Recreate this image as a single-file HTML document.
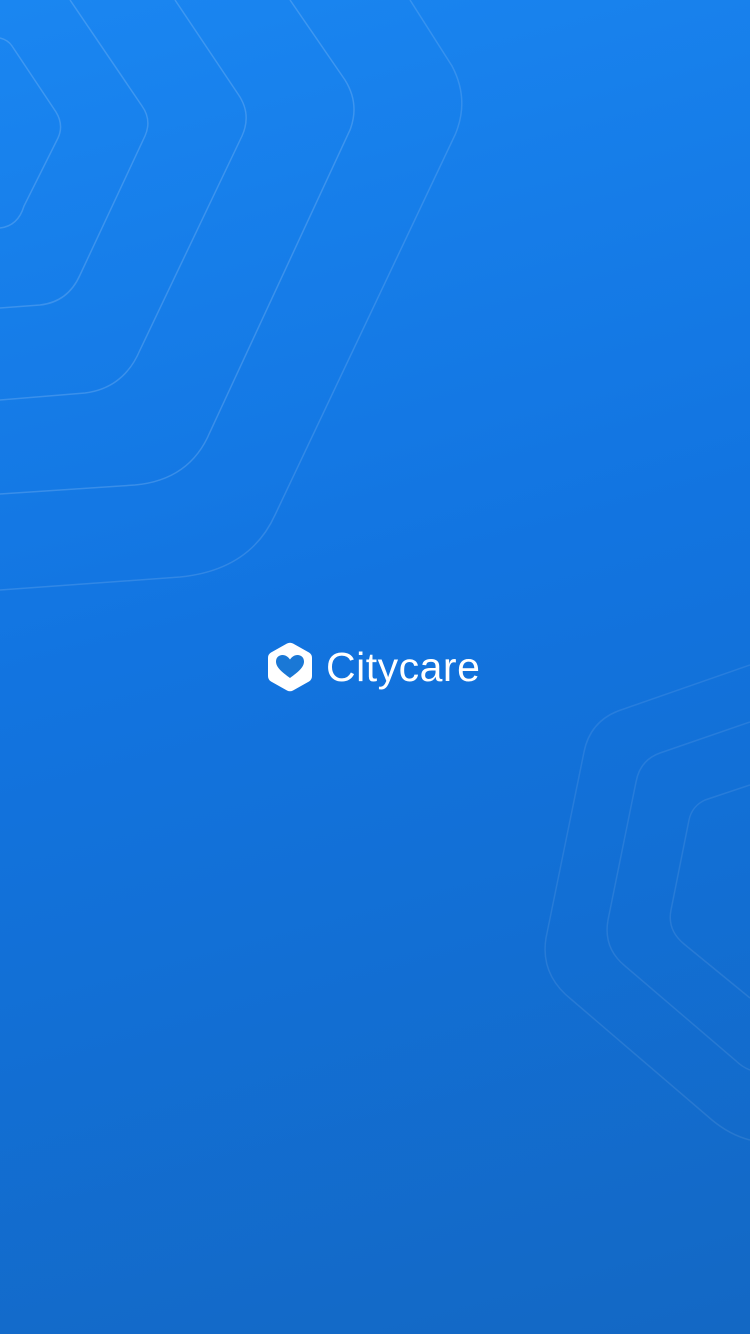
<!DOCTYPE html>
<html><head><meta charset="utf-8"><style>
html,body{margin:0;padding:0}
body{width:750px;height:1334px;overflow:hidden;position:relative;background:linear-gradient(165deg,#1a86f1 0%,#1274e0 45%,#1368c4 100%);font-family:"Liberation Sans",sans-serif}
svg{position:absolute}
.t{position:absolute;left:326px;top:644px;color:#fff;font-size:41px;letter-spacing:0.5px;font-family:"Liberation Sans",sans-serif;line-height:46px}
</style></head><body>
<svg width="750" height="1334" fill="none" stroke-width="1.5" style="left:0;top:0">
<g stroke="rgba(255,255,255,0.16)">
<path d="M0 38 Q8 40 12 46 L56 112 Q64 125 58 138 L24 206 Q18 226 0 228"/>
<path d="M70 0 L142 106 Q152 120 145 136 L80 275 Q68 302 40 305 L0 308"/>
<path d="M175 0 L238 94 Q252 114 242 136 L140 350 Q124 388 85 393 L0 400"/>
<path d="M290 0 L345 80 Q360 104 350 130 L210 432 Q190 480 135 485 L0 494"/>
<path d="M410 0 L452 66 Q470 100 455 135 L275 515 Q250 570 180 577 L0 590" stroke="rgba(255,255,255,0.13)"/>
</g>
<g stroke="rgba(255,255,255,0.09)">
<path d="M750 665 L618 711 Q590 722 584 752 L546 938 Q540 975 572 1000 L712 1120 Q730 1135 750 1140"/>
<path d="M750 722 L660 753 Q640 760 636 782 L608 920 Q603 948 625 966 L735 1060 Q742 1067 750 1070"/>
<path d="M750 785 L705 800 Q692 806 689 820 L671 910 Q667 930 684 944 L750 998"/>
</g>
</svg>
<svg viewBox="0 0 50 50" width="50" height="50" style="left:266px;top:642px">
<path d="M21 1.5 Q24 0 27 1.5 L43 10.5 Q46 12.3 46 16 L46 34 Q46 37.7 43 39.5 L27 48.5 Q24 50 21 48.5 L5 39.5 Q2 37.7 2 34 L2 16 Q2 12.3 5 10.5 Z" fill="#fff"/>
<path d="M24 36 C16 30 10 25.5 10 19.5 C10 15.5 13 13 16.5 13 C19.8 13 22.3 15 24 17.5 C25.7 15 28.2 13 31.5 13 C35 13 38 15.5 38 19.5 C38 25.5 32 30 24 36 Z" fill="#1a78d6"/>
</svg>
<div class="t">Citycare</div>
</body></html>
